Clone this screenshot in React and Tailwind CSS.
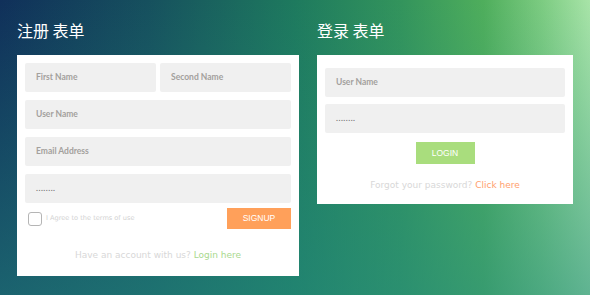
import React from "react";

const Field = ({ placeholder, password, extra = "" }) => (
  <div className={`flex h-[29px] items-center rounded-[2px] bg-[#f0f0f0] pl-[11px] ${extra}`}>
    {password ? (
      <span className="font-['Liberation_Sans',sans-serif] text-[7px] font-bold leading-none tracking-[0.5px] text-[#7a7a7a]">........</span>
    ) : (
      <span className="font-['Lato',sans-serif] text-[8.5px] font-bold text-[#a3a09d]">{placeholder}</span>
    )}
  </div>
);

const App = () => {
  return (
    <div className="h-[295px] w-[590px] overflow-hidden bg-[linear-gradient(to_bottom,rgba(36,140,128,0)_0%,rgba(36,140,128,0.55)_100%),linear-gradient(to_right,#10305a_0%,#16505e_25%,#1e7a5e_50%,#33945c_68%,#4fae5c_82%,#7dcc82_92%,#a8e4a8_100%)] font-['Liberation_Sans',sans-serif]">
      <div className="flex gap-[18px] pl-[17px] pt-[20px]">
        <div className="w-[282px]">
          <h2 className="h-[35px] font-['Noto_Sans_CJK_SC',sans-serif] text-[16px] font-normal leading-[20px] text-white">注册 表单</h2>
          <div className="bg-white px-[8px] pb-[13px] pt-[8px]">
            <div className="flex flex-col gap-2">
              <div className="flex gap-[4px]">
                <Field placeholder="First Name" extra="flex-1" />
                <Field placeholder="Second Name" extra="flex-1" />
              </div>
              <Field placeholder="User Name" />
              <Field placeholder="Email Address" />
              <Field password />
            </div>
            <div className="mt-[5px] flex items-center justify-between">
              <label className="flex items-center gap-[4px] pl-[3px]">
                <span className="h-[14px] w-[14px] rounded-[3px] border border-[#b5b5b5] bg-white"></span>
                <span className="font-['DejaVu_Sans',sans-serif] text-[6.6px] text-[#d2d2d2]">I Agree to the terms of use</span>
              </label>
              <button className="h-[21px] w-[64px] bg-[#ffa05a] text-[8.5px] text-white">SIGNUP</button>
            </div>
            <p className="mt-[20px] text-center font-['DejaVu_Sans',sans-serif] text-[9px] text-[#d8d8d8]">
              Have an account with us? <span className="text-[#a9d98e]">Login here</span>
            </p>
          </div>
        </div>
        <div className="w-[256px]">
          <h2 className="h-[35px] font-['Noto_Sans_CJK_SC',sans-serif] text-[16px] font-normal leading-[20px] text-white">登录 表单</h2>
          <div className="bg-white px-[8px] pb-[11px] pt-[13px]">
            <div className="flex flex-col gap-[7px]">
              <Field placeholder="User Name" />
              <Field password />
            </div>
            <div className="mt-[9px] flex justify-center">
              <button className="h-[22px] w-[59px] bg-[#a9dd7d] text-[8.5px] text-white">LOGIN</button>
            </div>
            <p className="mt-[15px] text-center font-['DejaVu_Sans',sans-serif] text-[9px] text-[#d8d8d8]">
              Forgot your password? <span className="text-[#ffa06e]">Click here</span>
            </p>
          </div>
        </div>
      </div>
    </div>
  );
};

export default App;
